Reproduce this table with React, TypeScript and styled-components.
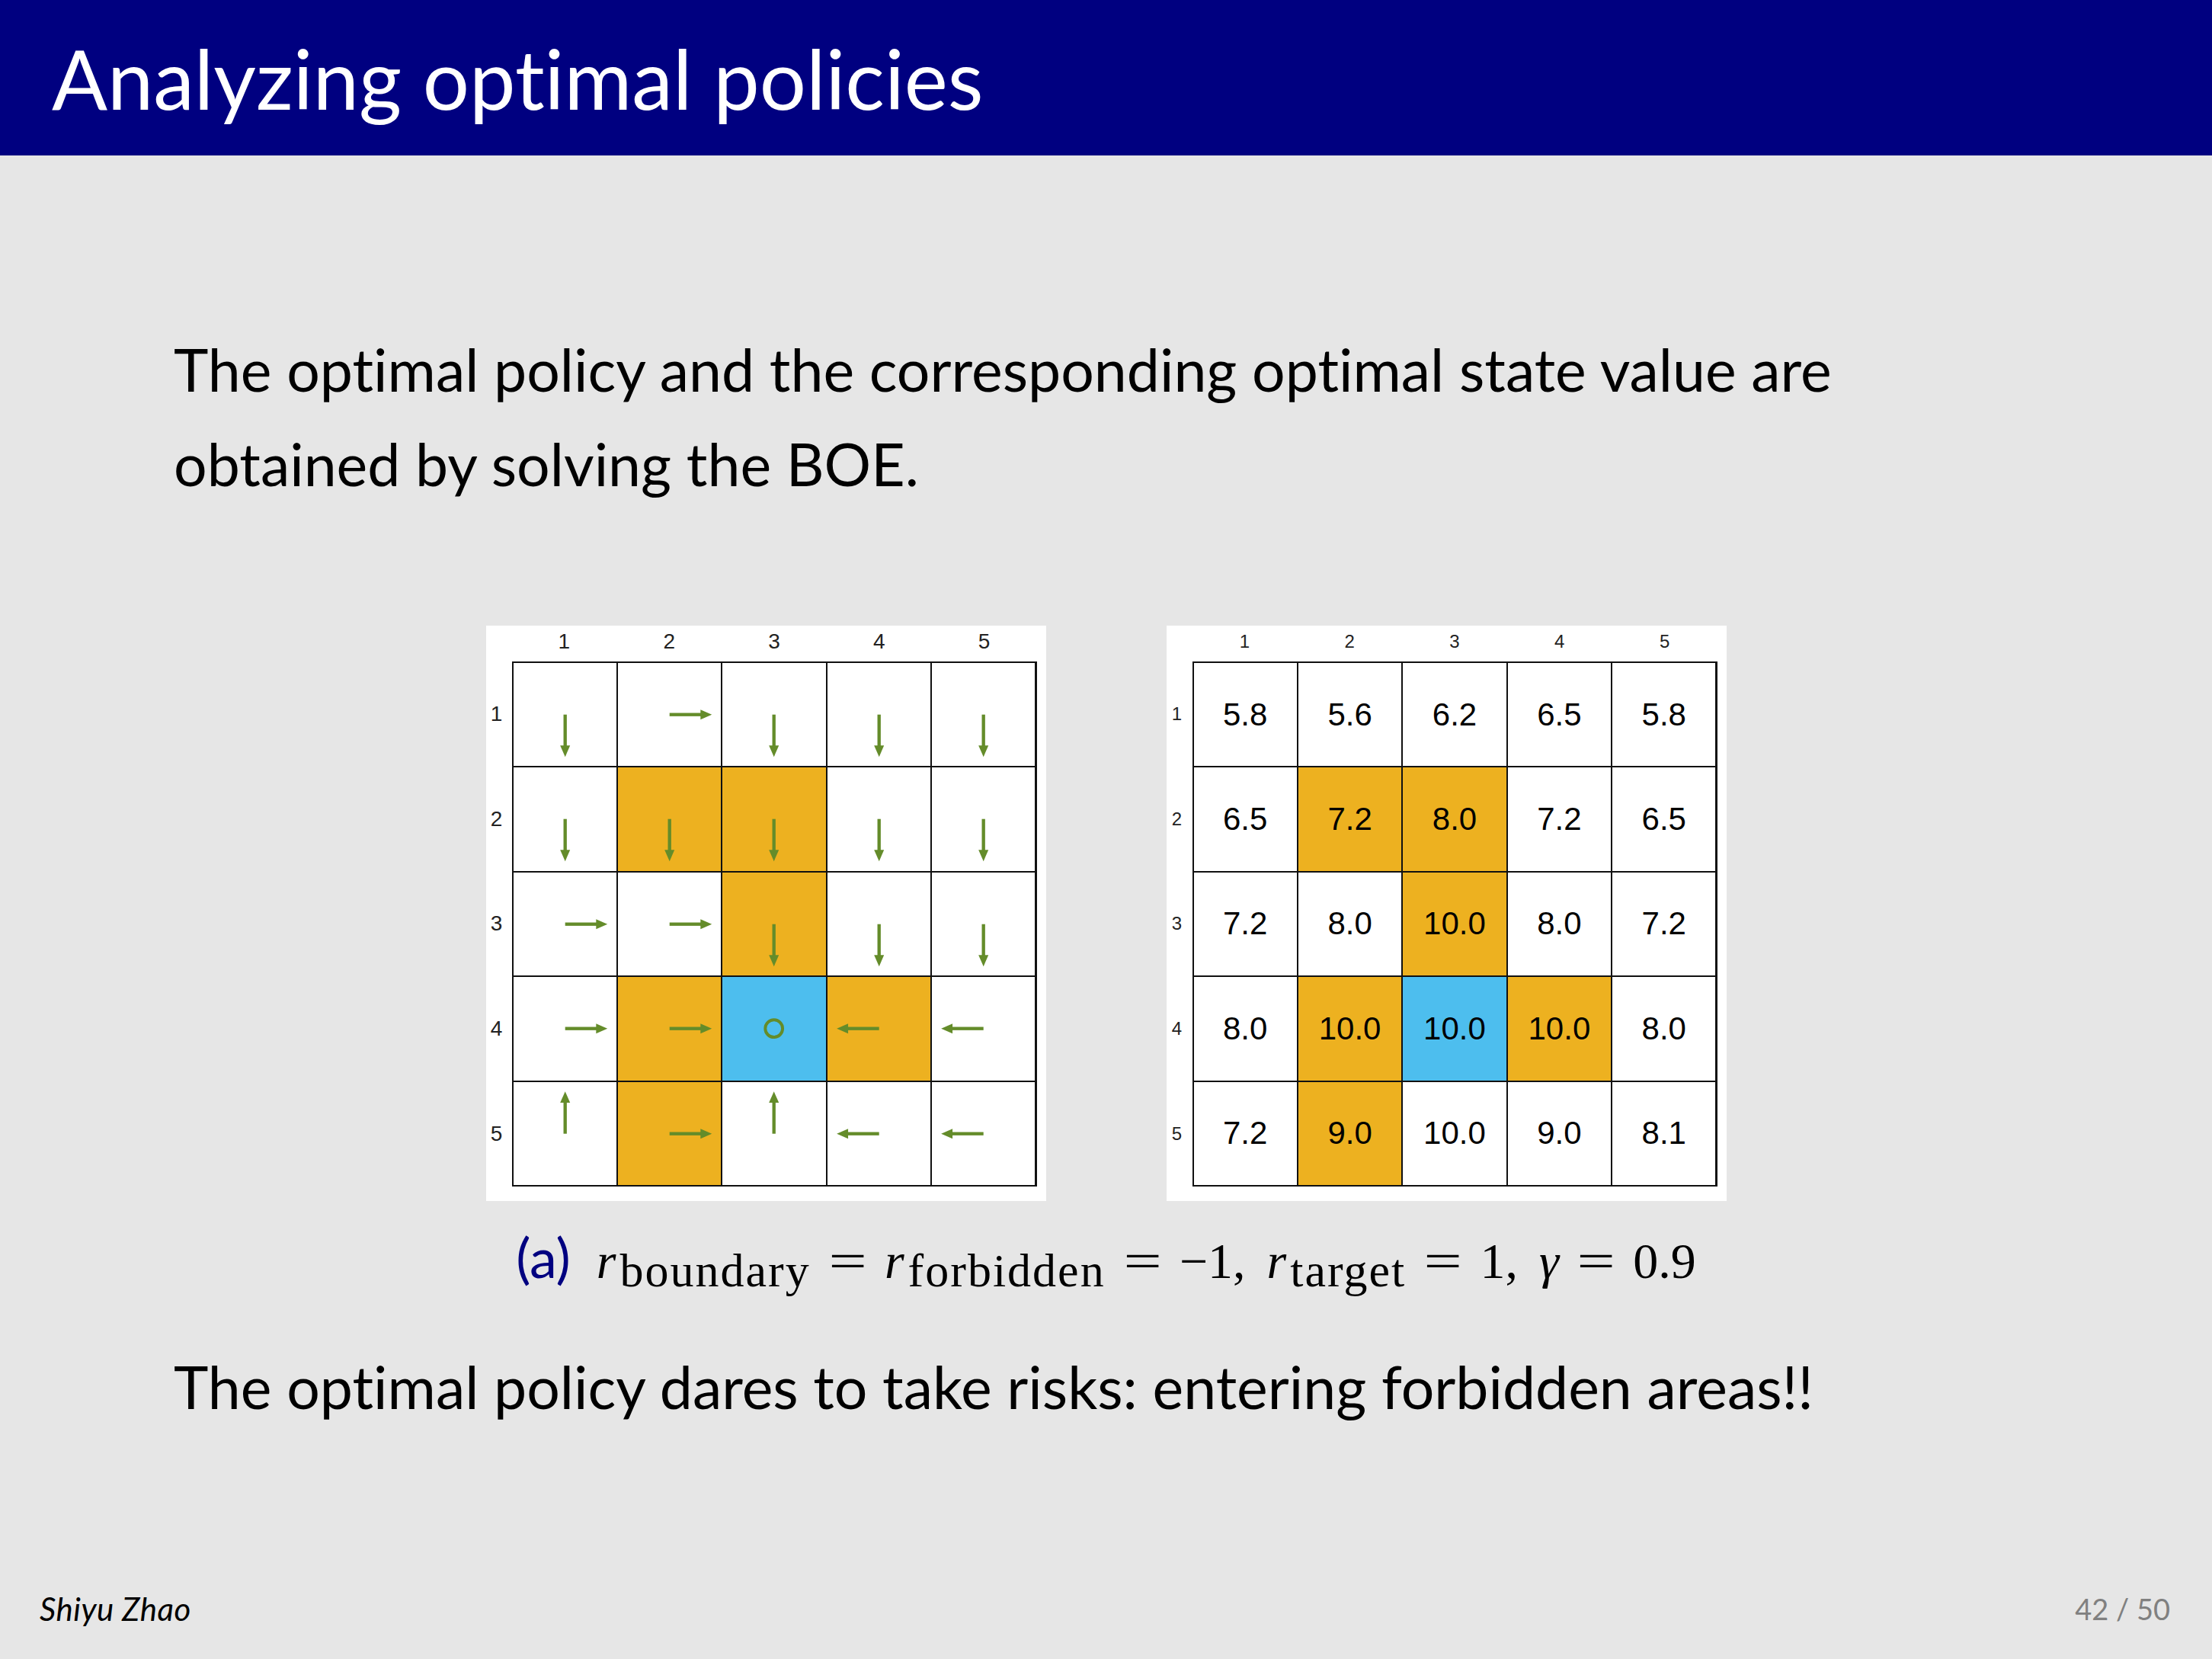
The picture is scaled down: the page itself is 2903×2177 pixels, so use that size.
import * as React from "react";
import styled, { createGlobalStyle } from "styled-components";

const colors = {
  navy: "#000080",
  slide: "#e6e6e6",
  forbidden: "#edb120",
  target: "#4dbeee",
  arrow: "#648c2a",
  grid: "#111111",
  muted: "#808080",
};

const fonts = {
  text: '"Lato", "Noto Sans", sans-serif',
  math: '"Liberation Serif", "DejaVu Serif", serif',
  chart: '"Liberation Sans", Arial, sans-serif',
};

type Action = "up" | "down" | "left" | "right" | "stay";
type Kind = "free" | "forbidden" | "target";

const kinds: Kind[][] = [
  ["free", "free", "free", "free", "free"],
  ["free", "forbidden", "forbidden", "free", "free"],
  ["free", "free", "forbidden", "free", "free"],
  ["free", "forbidden", "target", "forbidden", "free"],
  ["free", "forbidden", "free", "free", "free"],
];

const policy: Action[][] = [
  ["down", "right", "down", "down", "down"],
  ["down", "down", "down", "down", "down"],
  ["right", "right", "down", "down", "down"],
  ["right", "right", "stay", "left", "left"],
  ["up", "right", "up", "left", "left"],
];

const values: string[][] = [
  ["5.8", "5.6", "6.2", "6.5", "5.8"],
  ["6.5", "7.2", "8.0", "7.2", "6.5"],
  ["7.2", "8.0", "10.0", "8.0", "7.2"],
  ["8.0", "10.0", "10.0", "10.0", "8.0"],
  ["7.2", "9.0", "10.0", "9.0", "8.1"],
];

const angles: Record<Exclude<Action, "stay">, number> = {
  right: 0,
  down: 90,
  left: 180,
  up: 270,
};

const GlobalStyle = createGlobalStyle`
  html, body {
    margin: 0;
    padding: 0;
    background: ${colors.slide};
  }
`;

const Slide = styled.div`
  width: 2903px;
  height: 2177px;
  background: ${colors.slide};
  display: flex;
  flex-direction: column;
  overflow: hidden;
  font-family: ${fonts.text};
  font-variant-ligatures: none;
  color: #000;
`;

const TitleBar = styled.header`
  height: 204px;
  flex-shrink: 0;
  background: ${colors.navy};
  display: flex;
  align-items: center;
  padding-left: 68px;
`;

const Title = styled.h1`
  margin: 0;
  font-family: ${fonts.text};
  font-weight: 400;
  font-size: 108px;
  line-height: 1;
  color: #fff;
`;

const Body = styled.main`
  flex: 1;
  display: flex;
  flex-direction: column;
  padding: 0 228px;
`;

const Paragraph = styled.p<{ $top: number }>`
  margin: ${(p) => p.$top}px 0 0;
  font-size: 77px;
  line-height: 124px;
  font-weight: 400;
`;

const FigureRow = styled.div`
  margin: 151px -228px 0;
  display: flex;
  justify-content: center;
  gap: 158px;
`;

const Panel = styled.div`
  background: #fff;
  display: grid;
  grid-template-columns: 34px 689px;
  grid-template-rows: 47px 689px;
  padding: 0 12px 19px 0;
  font-family: ${fonts.chart};
`;

const ColLabels = styled.div<{ $size: number }>`
  grid-column: 2;
  display: grid;
  grid-template-columns: repeat(5, 1fr);
  align-items: center;
  height: 42px;
  font-size: ${(p) => p.$size}px;
  color: #222;
  text-align: center;
`;

const RowLabels = styled.div<{ $size: number }>`
  grid-column: 1;
  grid-row: 2;
  display: grid;
  grid-template-rows: repeat(5, 1fr);
  align-items: center;
  padding-right: 6px;
  font-size: ${(p) => p.$size}px;
  color: #222;
  text-align: center;
`;

const Board = styled.div`
  grid-column: 2;
  grid-row: 2;
  display: grid;
  grid-template-columns: repeat(5, 1fr);
  grid-template-rows: repeat(5, 1fr);
  gap: 2px;
  padding: 2px;
  background: ${colors.grid};
`;

const Cell = styled.div<{ $kind: Kind }>`
  background: ${(p) =>
    p.$kind === "forbidden"
      ? colors.forbidden
      : p.$kind === "target"
      ? colors.target
      : "#fff"};
  display: flex;
  align-items: center;
  justify-content: center;
  font-size: 42px;
  color: #000;
`;

const ArrowSvg = styled.svg`
  width: 100%;
  height: 100%;
  display: block;
`;

const Caption = styled.div`
  margin-top: 23px;
  margin-left: -228px;
  margin-right: -228px;
  text-align: center;
  font-family: ${fonts.math};
  font-size: 66px;
  line-height: 100px;
  white-space: nowrap;
`;

const CaptionTag = styled.span`
  font-family: ${fonts.text};
  font-size: 72px;
  color: ${colors.navy};
  margin-right: 34px;
`;

const Var = styled.span`
  font-style: italic;
`;

const Sub = styled.span`
  font-size: 62px;
  line-height: 1;
  letter-spacing: 2px;
  vertical-align: -11px;
  margin-left: 5px;
`;

const Op = styled.span`
  display: inline-block;
  margin: 0 30px;
  transform: scaleX(1.35);
`;

const Sep = styled.span`
  display: inline-block;
  width: 28px;
`;

const Footer = styled.footer`
  height: 90px;
  flex-shrink: 0;
  display: flex;
  justify-content: space-between;
  align-items: flex-start;
  padding: 0 55px 0 52px;
  font-size: 38px;
  line-height: 48px;
`;

const Author = styled.span`
  font-style: italic;
  font-size: 42px;
  letter-spacing: 0.5px;
`;

const PageNo = styled.span`
  color: ${colors.muted};
`;

const Arrow = ({ action }: { action: Action }) => (
  <ArrowSvg viewBox="0 0 100 100">
    {action === "stay" ? (
      <circle cx="50" cy="50" r="8.4" fill="none" stroke={colors.arrow} strokeWidth="2.9" />
    ) : (
      <g transform={`rotate(${angles[action]} 50 50)`} fill={colors.arrow}>
        <rect x="50" y="48.4" width="32" height="3.2" />
        <polygon points="80,45.2 91,50 80,54.8" />
      </g>
    )}
  </ArrowSvg>
);

const Figure = ({
  labelSize,
  render,
}: {
  labelSize: number;
  render: (r: number, c: number) => React.ReactNode;
}) => (
  <Panel>
    <ColLabels $size={labelSize}>
      {[1, 2, 3, 4, 5].map((n) => (
        <span key={n}>{n}</span>
      ))}
    </ColLabels>
    <RowLabels $size={labelSize}>
      {[1, 2, 3, 4, 5].map((n) => (
        <span key={n}>{n}</span>
      ))}
    </RowLabels>
    <Board>
      {kinds.map((row, r) =>
        row.map((kind, c) => (
          <Cell key={`${r}-${c}`} $kind={kind}>
            {render(r, c)}
          </Cell>
        ))
      )}
    </Board>
  </Panel>
);

export default function App() {
  return (
    <>
      <GlobalStyle />
      <Slide>
        <TitleBar>
          <Title>Analyzing optimal policies</Title>
        </TitleBar>
        <Body>
          <Paragraph $top={218}>
            The optimal policy and the corresponding optimal state value are
            <br />
            obtained by solving the BOE.
          </Paragraph>
          <FigureRow>
            <Figure labelSize={28} render={(r, c) => <Arrow action={policy[r][c]} />} />
            <Figure labelSize={24} render={(r, c) => values[r][c]} />
          </FigureRow>
          <Caption>
            <CaptionTag>(a)</CaptionTag>
            <Var>r</Var>
            <Sub>boundary</Sub>
            <Op>=</Op>
            <Var>r</Var>
            <Sub>forbidden</Sub>
            <Op>=</Op>
            −1,
            <Sep />
            <Var>r</Var>
            <Sub>target</Sub>
            <Op>=</Op>
            1,
            <Sep />
            <Var>γ</Var>
            <Op>=</Op>
            0.9
          </Caption>
          <Paragraph $top={52}>
            The optimal policy dares to take risks: entering forbidden areas!!
          </Paragraph>
        </Body>
        <Footer>
          <Author>Shiyu Zhao</Author>
          <PageNo>42 / 50</PageNo>
        </Footer>
      </Slide>
    </>
  );
}
